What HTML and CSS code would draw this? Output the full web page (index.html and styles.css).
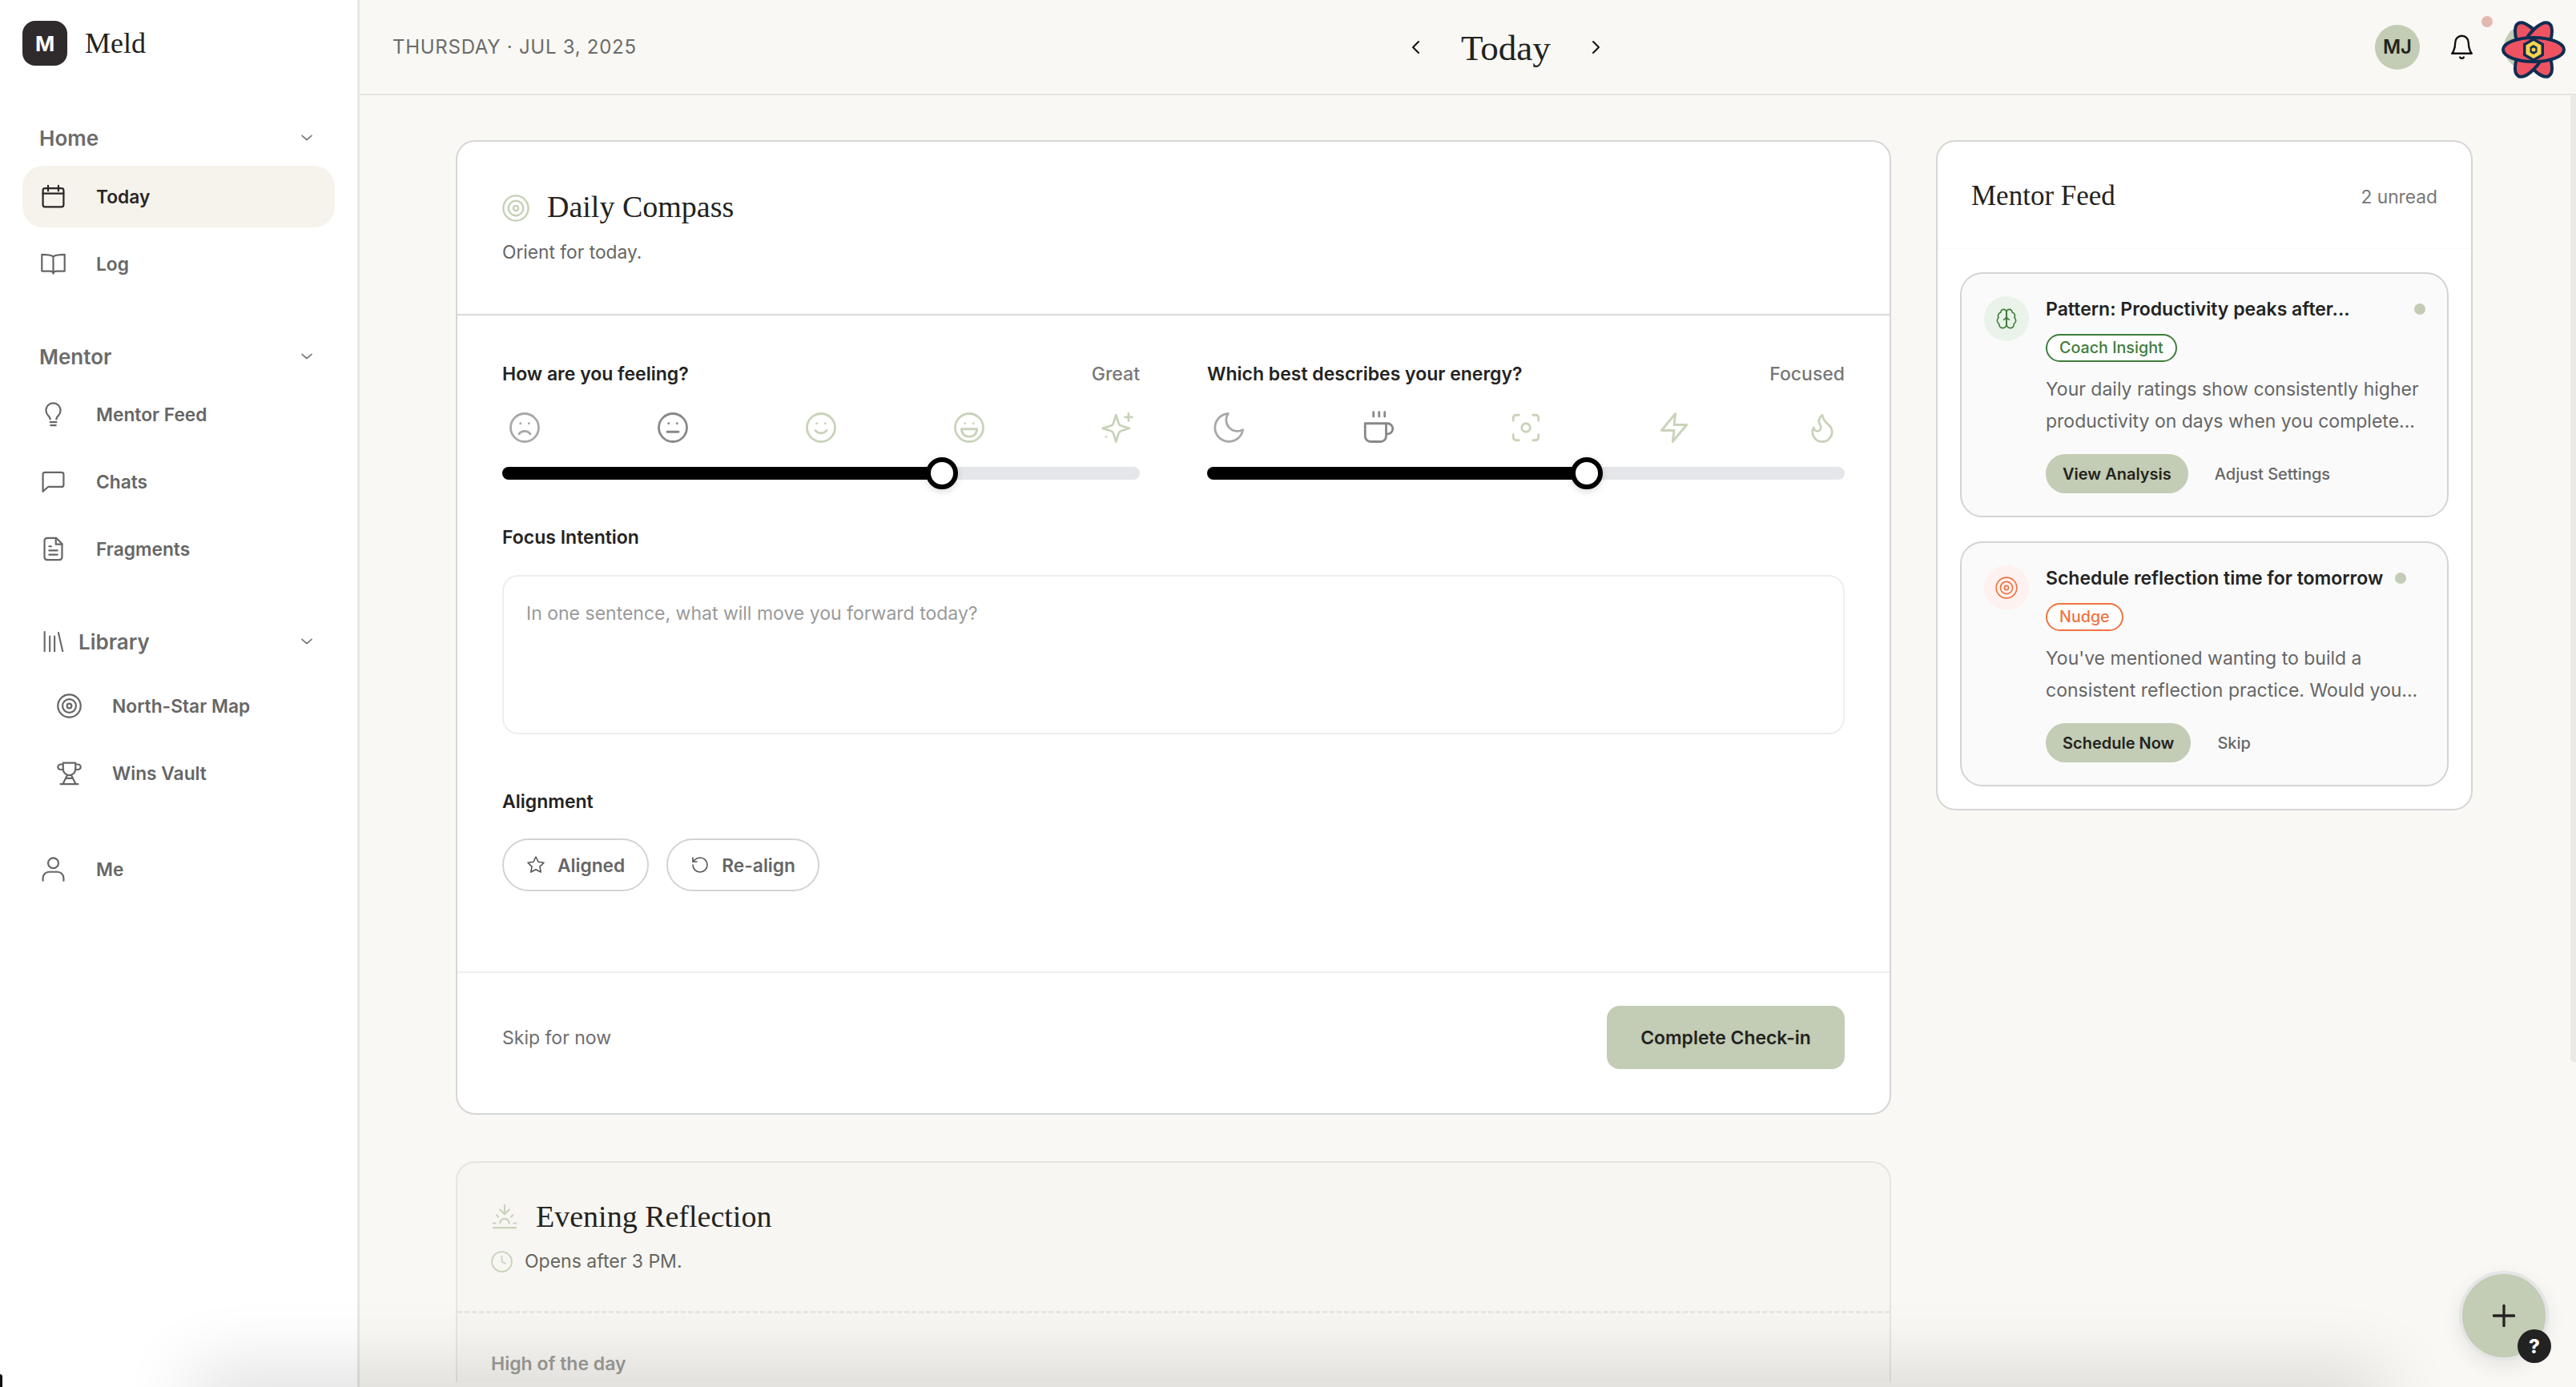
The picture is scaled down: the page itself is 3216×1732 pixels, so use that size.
FILE: index.html
```html
<!DOCTYPE html>
<html lang="en">
<head>
    <meta charset="UTF-8">
    <meta name="viewport" content="width=device-width, initial-scale=1.0">
    <title>Meld - Today</title>
    <link rel="stylesheet" href="styles.css">
</head>
<body>
    <svg class="sprite" xmlns="http://www.w3.org/2000/svg">
        <symbol id="i-chevron" viewBox="0 0 24 24"><path d="m3 8 9 8 9-8"/></symbol>
        <symbol id="i-calendar" viewBox="0 0 24 24"><rect x="2" y="4" width="20" height="18" rx="2"/><path d="M7 1.500v5M17 1.500v5M2 9h20"/></symbol>
        <symbol id="i-book" viewBox="0 0 24 24"><path d="M12 5C10 3.500 7 3 1 3v16h8c2 0 3 1 3 2.500 0-1.500 1-2.500 3-2.500h8V3c-6 0-9 .5-11 2Zm0 0v16.500"/></symbol>
        <symbol id="i-bulb" viewBox="0 0 24 24"><path d="M9 16.500c-.3-1.500-1-2.400-2-3.500a7 7 0 1 1 10 0c-1 1.100-1.700 2-2 3.500M9 19.500h6M9.500 22.500h5"/></symbol>
        <symbol id="i-chat" viewBox="0 0 24 24"><path d="M22 15a2 2 0 0 1-2 2H7l-5 4.500V5a2 2 0 0 1 2-2h16a2 2 0 0 1 2 2z"/></symbol>
        <symbol id="i-file" viewBox="0 0 24 24"><path d="M15 1.500H6a2.500 2.500 0 0 0-2.500 2.500v16A2.500 2.500 0 0 0 6 22.500h12a2.500 2.500 0 0 0 2.500-2.500V7z"/><path d="M14.500 1.500V7.500h6M8 9.500h2M8 13.500h8M8 17.500h8"/></symbol>
        <symbol id="i-library" viewBox="0 0 24 24"><path d="M2 1v23M8 6v18M13.500 6v18M18 2l5 22"/></symbol>
        <symbol id="i-target" viewBox="0 0 24 24"><circle cx="12" cy="12" r="11"/><circle cx="12" cy="12" r="6.500"/><circle cx="12" cy="12" r="2.200"/></symbol>
        <symbol id="i-trophy" viewBox="0 0 24 24"><path d="M6 2h12v6a6 6 0 0 1-12 0zM6 3.500H3.500a2.500 2.500 0 0 0 0 5H6.300M18 3.500h2.500a2.500 2.500 0 0 1 0 5h-2.800M10 14l-4 8M14 14l4 8M8.500 17h7M3.500 22.500h17"/></symbol>
        <symbol id="i-user" viewBox="0 0 24 24"><circle cx="12" cy="6" r="5"/><path d="M2 23v-2.500a6 6 0 0 1 6-6h8a6 6 0 0 1 6 6V23"/></symbol>
        <symbol id="i-bell" viewBox="0 0 24 24"><path d="M6 8a6 6 0 0 1 12 0c0 7 3 10 3 10H3s3-3 3-10M10.300 21.500a1.940 1.940 0 0 0 3.400 0"/></symbol>
        <symbol id="i-left" viewBox="0 0 12 18"><path d="M10 2 3 9l7 7"/></symbol>
        <symbol id="i-right" viewBox="0 0 12 18"><path d="m2 2 7 7-7 7"/></symbol>
        <symbol id="i-frown" viewBox="0 0 24 24"><circle cx="12" cy="12" r="10"/><path d="M16 16.500s-1.500-2-4-2-4 2-4 2M9 9h.01M15 9h.01"/></symbol>
        <symbol id="i-meh" viewBox="0 0 24 24"><circle cx="12" cy="12" r="10"/><path d="M8 15h8M9 9h.01M15 9h.01"/></symbol>
        <symbol id="i-smile" viewBox="0 0 24 24"><circle cx="12" cy="12" r="10"/><path d="M8 14s1.500 2 4 2 4-2 4-2M9 9h.01M15 9h.01"/></symbol>
        <symbol id="i-laugh" viewBox="0 0 24 24"><circle cx="12" cy="12" r="10"/><path d="M17.500 13c0 3.500-2.500 5.500-5.500 5.500S6.500 16.500 6.500 13zM9 9h.01M15 9h.01"/></symbol>
        <symbol id="i-sparkle" viewBox="0 0 24 24"><path d="M11 3l1.800 5.700a3 3 0 0 0 2 2l5.700 1.800-5.700 1.800a3 3 0 0 0-2 2L11 22l-1.800-5.700a3 3 0 0 0-2-2L1.500 12.500l5.700-1.800a3 3 0 0 0 2-2zM20 2v5M17.500 4.500h5M4 18.500v.01"/></symbol>
        <symbol id="i-moon" viewBox="0 0 24 24"><path d="M11 2a8 8 0 0 0 10.500 11.500A10 10 0 1 1 11 2Z"/></symbol>
        <symbol id="i-cup" viewBox="0 0 24 24"><path d="M9 1v3M13 1v3M17 1v3M18 9h1a3.500 3.500 0 0 1 0 7.500h-1M3 9h15v9a4 4 0 0 1-4 4H7a4 4 0 0 1-4-4z"/></symbol>
        <symbol id="i-focus" viewBox="0 0 24 24"><path d="M3 7V5a2 2 0 0 1 2-2h2M17 3h2a2 2 0 0 1 2 2v2M21 17v2a2 2 0 0 1-2 2h-2M7 21H5a2 2 0 0 1-2-2v-2"/><circle cx="12" cy="12" r="3"/></symbol>
        <symbol id="i-zap" viewBox="0 0 24 24"><path d="M13 2 3 14h9l-1 8 10-12h-9z"/></symbol>
        <symbol id="i-flame" viewBox="0 0 24 24"><path d="M8.500 14.500A2.500 2.500 0 0 0 11 12c0-1.380-.5-2-1-3-1.072-2.143-.224-4.054 2-6 .5 2.500 2 4.900 4 6.500 2 1.600 3 3.500 3 5.500a7 7 0 1 1-14 0c0-1.153.433-2.294 1-3a2.500 2.500 0 0 0 2.500 2.500z"/></symbol>
        <symbol id="i-star" viewBox="0 0 24 24"><path d="M12 2l3.090 6.260L22 9.270l-5 4.870 1.180 6.880L12 17.770l-6.180 3.250L7 14.140 2 9.270l6.910-1.010z"/></symbol>
        <symbol id="i-undo" viewBox="0 0 24 24"><path d="M3 12a9 9 0 1 0 9-9 9.750 9.750 0 0 0-6.740 2.740L3 8"/><path d="M3 3v5h5"/></symbol>
        <symbol id="i-sunset" viewBox="0 0 24 24"><path d="M12 10V2M4.930 10.930l1.410 1.410M2 18h2M20 18h2M19.070 10.930l-1.410 1.410M22 22H2M16 6l-4 4-4-4M16 18a4 4 0 0 0-8 0"/></symbol>
        <symbol id="i-clock" viewBox="0 0 24 24"><circle cx="12" cy="12" r="11"/><path d="M12 6v6l4 2"/></symbol>
        <symbol id="i-brain" viewBox="0 0 24 24"><path d="M12 5a3 3 0 1 0-5.997.125 4 4 0 0 0-2.526 5.770 4 4 0 0 0 .556 6.588A4 4 0 1 0 12 18Z"/><path d="M12 5a3 3 0 1 1 5.997.125 4 4 0 0 1 2.526 5.770 4 4 0 0 1-.556 6.588A4 4 0 1 1 12 18Z"/><path d="M15 13a4.500 4.500 0 0 1-3-4 4.500 4.500 0 0 1-3 4M12 18V5"/></symbol>
        <symbol id="i-plus" viewBox="0 0 24 24"><path d="M12 1v22M1 12h22"/></symbol>
    </svg>

    <div class="app">
        <aside class="sidebar">
            <div class="brand">
                <span class="brand-mark">M</span>
                <span class="brand-name">Meld</span>
            </div>

            <div class="nav-head nav-head-first">Home <svg class="chev"><use href="#i-chevron"/></svg></div>
            <a class="nav-item active"><svg class="nav-icon"><use href="#i-calendar"/></svg>Today</a>
            <a class="nav-item"><svg class="nav-icon"><use href="#i-book"/></svg>Log</a>

            <div class="nav-head nav-head-mentor">Mentor <svg class="chev"><use href="#i-chevron"/></svg></div>
            <a class="nav-item"><svg class="nav-icon"><use href="#i-bulb"/></svg>Mentor Feed</a>
            <a class="nav-item"><svg class="nav-icon"><use href="#i-chat"/></svg>Chats</a>
            <a class="nav-item"><svg class="nav-icon"><use href="#i-file"/></svg>Fragments</a>

            <div class="nav-head nav-head-library"><svg class="lib-icon"><use href="#i-library"/></svg>Library <svg class="chev"><use href="#i-chevron"/></svg></div>
            <a class="nav-item nav-sub"><svg class="nav-icon"><use href="#i-target"/></svg>North-Star Map</a>
            <a class="nav-item nav-sub"><svg class="nav-icon"><use href="#i-trophy"/></svg>Wins Vault</a>

            <a class="nav-item nav-me"><svg class="nav-icon"><use href="#i-user"/></svg>Me</a>
        </aside>

        <div class="main">
            <header class="topbar">
                <div class="date">Thursday · Jul 3, 2025</div>
                <div class="day-nav">
                    <svg class="day-arrow"><use href="#i-left"/></svg>
                    <h1>Today</h1>
                    <svg class="day-arrow"><use href="#i-right"/></svg>
                </div>
                <div class="top-actions">
                    <span class="avatar">MJ</span>
                    <svg class="bell"><use href="#i-bell"/></svg>
                    <span class="notify-dot"></span>
                    <span class="avatar avatar-logo">
                        <svg class="atom" viewBox="0 0 84 84">
                            <g fill="#ef5361" stroke="#0f2d52" stroke-width="4">
                                <ellipse cx="42" cy="42" rx="38" ry="15" transform="rotate(60 42 42)"/>
                                <ellipse cx="42" cy="42" rx="38" ry="15" transform="rotate(120 42 42)"/>
                                <ellipse cx="42" cy="42" rx="38" ry="15"/>
                            </g>
                            <path d="M42 27 55 34.500v15L42 57 29 49.500v-15z" fill="#0f2d52"/>
                            <path d="M42 31 51.500 36.500v11L42 53l-9.500-5.500v-11z" fill="#f8d24d"/>
                            <path d="M42 36 46.500 38.700v6.600L42 48l-4.500-2.700v-6.600z" fill="#0f2d52"/>
                            <circle cx="42" cy="42" r="2.500" fill="#f8d24d"/>
                        </svg>
                    </span>
                </div>
            </header>

            <div class="content">
                <div class="col-main">
                    <section class="card">
                        <div class="card-head">
                            <h2><svg class="title-icon"><use href="#i-target"/></svg>Daily Compass</h2>
                            <p class="sub">Orient for today.</p>
                        </div>

                        <div class="card-body">
                            <div class="sliders">
                                <div class="slider-block">
                                    <div class="slider-label"><b>How are you feeling?</b><span>Great</span></div>
                                    <div class="scale">
                                        <svg class="tone-a"><use href="#i-frown"/></svg>
                                        <svg class="tone-b"><use href="#i-meh"/></svg>
                                        <svg class="tone-c"><use href="#i-smile"/></svg>
                                        <svg class="tone-c"><use href="#i-laugh"/></svg>
                                        <svg class="tone-c"><use href="#i-sparkle"/></svg>
                                    </div>
                                    <div class="track"><div class="fill" style="width: 69%"><span class="thumb"></span></div></div>
                                </div>
                                <div class="slider-block">
                                    <div class="slider-label"><b>Which best describes your energy?</b><span>Focused</span></div>
                                    <div class="scale">
                                        <svg class="tone-a"><use href="#i-moon"/></svg>
                                        <svg class="tone-b"><use href="#i-cup"/></svg>
                                        <svg class="tone-c"><use href="#i-focus"/></svg>
                                        <svg class="tone-c"><use href="#i-zap"/></svg>
                                        <svg class="tone-c"><use href="#i-flame"/></svg>
                                    </div>
                                    <div class="track"><div class="fill" style="width: 59.5%"><span class="thumb"></span></div></div>
                                </div>
                            </div>

                            <label class="field-label focus-label">Focus Intention</label>
                            <textarea class="intention" placeholder="In one sentence, what will move you forward today?"></textarea>

                            <label class="field-label align-label">Alignment</label>
                            <div class="pills">
                                <button class="pill"><svg><use href="#i-star"/></svg>Aligned</button>
                                <button class="pill"><svg><use href="#i-undo"/></svg>Re-align</button>
                            </div>
                        </div>

                        <div class="card-foot">
                            <span class="skip">Skip for now</span>
                            <button class="btn-primary">Complete Check-in</button>
                        </div>
                    </section>

                    <section class="card card-muted">
                        <div class="muted-head">
                            <h2><svg class="sun-icon"><use href="#i-sunset"/></svg>Evening Reflection</h2>
                            <p class="opens"><svg class="clock-icon"><use href="#i-clock"/></svg>Opens after 3 PM.</p>
                        </div>
                        <div class="muted-body">High of the day</div>
                    </section>
                </div>

                <aside class="feed">
                    <div class="feed-head">
                        <h3>Mentor Feed</h3>
                        <span>2 unread</span>
                    </div>
                    <div class="feed-list">
                        <article class="feed-card">
                            <span class="blob blob-green"><svg><use href="#i-brain"/></svg></span>
                            <div class="feed-text">
                                <div class="feed-title"><b>Pattern: Productivity peaks after...</b><i class="dot dot-end"></i></div>
                                <span class="badge badge-green">Coach Insight</span>
                                <p>Your daily ratings show consistently higher productivity on days when you complete...</p>
                                <div class="feed-actions">
                                    <button class="btn-small">View Analysis</button>
                                    <span class="link">Adjust Settings</span>
                                </div>
                            </div>
                        </article>
                        <article class="feed-card">
                            <span class="blob blob-orange"><svg><use href="#i-target"/></svg></span>
                            <div class="feed-text">
                                <div class="feed-title"><b>Schedule reflection time for tomorrow</b><i class="dot"></i></div>
                                <span class="badge badge-orange">Nudge</span>
                                <p>You've mentioned wanting to build a consistent reflection practice. Would you...</p>
                                <div class="feed-actions">
                                    <button class="btn-small">Schedule Now</button>
                                    <span class="link">Skip</span>
                                </div>
                            </div>
                        </article>
                    </div>
                </aside>
            </div>
        </div>
    </div>

    <div class="overlay">
        <div class="scroll-thumb"></div>
        <div class="bottom-shade"></div>
        <div class="corner"></div>
    </div>
    <button class="fab"><svg><use href="#i-plus"/></svg><span class="help">?</span></button>
</body>
</html>
```

FILE: styles.css
```css
* {
    box-sizing: border-box;
}
html, body {
    margin: 0;
    height: 100%;
    overflow: hidden;
}
body {
    font-family: Inter, "Liberation Sans", sans-serif;
    font-size: 22.750px;
    color: #232323;
    background: #f9f8f4;
    position: relative;
}
svg {
    fill: none;
    stroke: currentColor;
    stroke-linecap: round;
    stroke-linejoin: round;
    display: block;
}
.sprite {
    position: absolute;
    width: 0;
    height: 0;
}
h1, h2, h3, p {
    margin: 0;
    font-weight: 400;
}
h1, h2, h3, .brand-name {
    font-family: "Liberation Serif", serif;
    color: #232320;
}
button {
    font-family: inherit;
    cursor: pointer;
}

.app {
    display: flex;
    height: 100%;
    overflow: hidden;
}

/* sidebar */
.sidebar {
    width: 449px;
    flex: none;
    background: #fff;
    border-right: 3px solid #e6e6e6;
    padding: 26px 28px 0;
}
.brand {
    display: flex;
    align-items: center;
    gap: 22px;
    height: 56px;
}
.brand-mark {
    width: 56px;
    height: 56px;
    border-radius: 16px;
    background: #2f2b2c;
    color: #fff;
    font-weight: 700;
    font-size: 26px;
    display: flex;
    align-items: center;
    justify-content: center;
}
.brand-name {
    font-size: 36px;
}
.nav-head {
    height: 46px;
    display: flex;
    align-items: center;
    padding-left: 21px;
    padding-right: 27px;
    font-size: 26px;
    font-weight: 600;
    color: #6b6b6b;
}
.nav-head-first {
    margin-top: 67px;
    margin-bottom: 12px;
}
.nav-head-mentor {
    margin-top: 54px;
    margin-bottom: 11px;
}
.nav-head-library {
    margin-top: 54px;
    margin-bottom: 19px;
    padding-left: 25px;
}
.chev {
    width: 16px;
    height: 16px;
    margin-left: auto;
    stroke-width: 2.500;
    color: #777;
}
.lib-icon {
    width: 27px;
    height: 26px;
    margin-right: 18px;
    stroke-width: 2;
}
.nav-item {
    display: flex;
    align-items: center;
    height: 77px;
    margin-bottom: 7px;
    padding-left: 23px;
    border-radius: 26px;
    font-weight: 600;
    color: #666;
}
.nav-item.active {
    background: #f6f3ec;
    color: #2a2626;
}
.nav-icon {
    width: 31px;
    height: 31px;
    flex: none;
    margin-right: 38px;
    stroke-width: 1.700;
}
.nav-sub {
    padding-left: 43px;
}
.nav-me {
    margin-top: 43px;
}

/* top bar */
.main {
    flex: 1;
    min-width: 0;
}
.topbar {
    height: 119px;
    border-bottom: 2px solid #e5e4e2;
    padding: 0 34px 0 41px;
    display: flex;
    align-items: center;
    justify-content: space-between;
}
.date {
    font-size: 24px;
    letter-spacing: 0.720px;
    text-transform: uppercase;
    color: #6b6b6b;
}
.day-nav {
    display: flex;
    align-items: center;
    gap: 51px;
}
.day-nav h1 {
    font-size: 45px;
    line-height: 60px;
    margin-top: 3px;
}
.day-arrow {
    width: 12px;
    height: 18px;
    color: #111;
    stroke-width: 2;
}
.top-actions {
    display: flex;
    align-items: center;
    position: relative;
}
.avatar {
    width: 56px;
    height: 56px;
    border-radius: 50%;
    background: #c3ccb4;
    display: flex;
    align-items: center;
    justify-content: center;
    font-size: 24px;
    font-weight: 600;
    color: #232320;
}
.avatar-logo {
    margin-left: 36px;
    position: relative;
}
.atom {
    position: absolute;
    left: -5px;
    top: -11px;
    width: 84px;
    height: 84px;
    stroke: none;
}
.bell {
    width: 33px;
    height: 33px;
    margin-left: 36px;
    color: #111;
    stroke-width: 1.700;
}
.notify-dot {
    position: absolute;
    left: 133px;
    top: -11px;
    width: 14px;
    height: 14px;
    border-radius: 50%;
    background: #e3b8ae;
}

/* content columns */
.content {
    display: flex;
    align-items: flex-start;
    gap: 56px;
    padding: 56px 0 0 120px;
}
.col-main {
    width: 1792px;
    flex: none;
}
.card {
    background: #fff;
    border: 2px solid #d6d6d6;
    border-radius: 24px;
}
.card-head {
    padding: 57px 56px 61px;
    border-bottom: 2px solid #dadada;
}
.card-head h2 {
    display: flex;
    align-items: center;
    font-size: 38px;
    line-height: 48px;
}
.title-icon {
    width: 34px;
    height: 34px;
    margin-top: 3px;
    margin-right: 22px;
    color: #c5d0b5;
    stroke-width: 1.700;
}
.sub {
    margin-top: 17px;
    line-height: 32px;
    color: #666;
}
.card-body {
    padding: 57px 56px 100px;
}
.sliders {
    display: flex;
    gap: 84px;
}
.slider-block {
    flex: 1;
}
.slider-label {
    display: flex;
    justify-content: space-between;
    line-height: 32px;
    font-size: 23px;
}
.slider-label b {
    font-weight: 600;
    color: #232323;
}
.slider-label span {
    font-weight: 500;
    color: #777;
}
.scale {
    display: flex;
    justify-content: space-between;
    margin-top: 30px;
}
.scale svg {
    width: 56px;
    height: 42px;
    stroke-width: 1.600;
}
.tone-a {
    color: #a8a8a8;
}
.tone-b {
    color: #888;
}
.tone-c {
    color: #c8d3b9;
}
.track {
    height: 16px;
    margin-top: 28px;
    border-radius: 8px;
    background: #e5e6ea;
}
.fill {
    height: 100%;
    background: #000;
    border-radius: 8px;
    position: relative;
}
.thumb {
    position: absolute;
    right: -20px;
    top: -12px;
    width: 40px;
    height: 40px;
    border-radius: 50%;
    border: 6px solid #000;
    background: #fff;
    box-shadow: 0 3px 8px rgba(0, 0, 0, 0.15);
}
.field-label {
    display: block;
    line-height: 32px;
    font-size: 23px;
    font-weight: 600;
}
.focus-label {
    margin-top: 56px;
}
.align-label {
    margin-top: 68px;
}
.intention {
    display: block;
    width: 100%;
    height: 199px;
    margin-top: 31px;
    padding: 30px 28px;
    border: 2px solid #eeeeee;
    border-radius: 20px;
    font-family: inherit;
    font-size: 23px;
    line-height: 32px;
    resize: none;
    outline: none;
    background: #fff;
}
.intention::placeholder {
    color: #9a9a9a;
}
.pills {
    display: flex;
    gap: 22px;
    margin-top: 30px;
}
.pill {
    height: 66px;
    padding: 0 28px;
    display: flex;
    align-items: center;
    gap: 15px;
    background: #fff;
    border: 2px solid #d3d3d3;
    border-radius: 33px;
    font-size: 22.750px;
    font-weight: 600;
    color: #666;
}
.pill svg {
    width: 24px;
    height: 24px;
    stroke-width: 1.600;
    color: #555;
}
.card-foot {
    display: flex;
    align-items: center;
    justify-content: space-between;
    padding: 41px 56px 55px;
    border-top: 2px solid #efefef;
}
.skip {
    font-size: 23px;
    color: #6e6e6e;
}
.btn-primary {
    width: 297px;
    height: 79px;
    border: none;
    border-radius: 16px;
    background: #c3ccb4;
    color: #232320;
    font-size: 22.900px;
    font-weight: 600;
}

/* evening card */
.card-muted {
    margin-top: 58px;
    height: 276px;
    border-bottom: none;
    border-radius: 24px 24px 0 0;
    background: #f7f6f2;
    border-color: #e5e5e3;
}
.muted-head {
    padding: 43px 42px 46px;
    border-bottom: 3px dashed #e6e6e3;
}
.muted-head h2 {
    display: flex;
    align-items: center;
    font-size: 38px;
    line-height: 48px;
}
.sun-icon {
    width: 34px;
    height: 34px;
    margin-right: 22px;
    color: #c8d3b9;
    stroke-width: 1.500;
}
.opens {
    display: flex;
    align-items: center;
    margin-top: 16px;
    line-height: 32px;
    font-size: 23px;
    color: #666660;
}
.clock-icon {
    width: 27px;
    height: 27px;
    margin-right: 15px;
    color: #c8d3b9;
    stroke-width: 1.600;
}
.muted-body {
    padding: 47px 42px 0;
    line-height: 32px;
    font-size: 23px;
    font-weight: 600;
    color: #9c9c98;
}

/* mentor feed */
.feed {
    width: 670px;
    flex: none;
    background: #fff;
    border: 2px solid #d6d6d6;
    border-radius: 24px;
}
.feed-head {
    height: 134px;
    padding: 4px 42px 0;
    display: flex;
    align-items: center;
    justify-content: space-between;
    border-bottom: 2px solid #fbfbf9;
}
.feed-head h3 {
    font-size: 35px;
}
.feed-head span {
    font-size: 22.750px;
    color: #777;
}
.feed-list {
    padding: 29px 28px 28px;
    display: flex;
    flex-direction: column;
    gap: 30px;
}
.feed-card {
    height: 306px;
    display: flex;
    align-items: flex-start;
    gap: 21px;
    padding: 26px 28px 0;
    background: #fafafa;
    border: 2px solid #d4d4d4;
    border-radius: 28px;
}
.blob {
    width: 56px;
    height: 56px;
    margin-top: 2px;
    border-radius: 50%;
    flex: none;
    display: flex;
    align-items: center;
    justify-content: center;
}
.blob svg {
    width: 28px;
    height: 28px;
    stroke-width: 1.400;
}
.blob-green {
    background: #e9f3e9;
    color: #3f7d3a;
}
.blob-orange {
    background: #fdf2ef;
    color: #ef7341;
}
.feed-text {
    flex: 1;
    min-width: 0;
}
.feed-title {
    display: flex;
    align-items: center;
    gap: 15px;
    line-height: 34px;
    font-size: 23px;
    margin-top: 1px;
}
.feed-title b {
    font-weight: 600;
    white-space: nowrap;
    color: #232323;
}
.dot {
    width: 14px;
    height: 14px;
    flex: none;
    border-radius: 50%;
    background: #c3ccb4;
}
.dot-end {
    margin-left: auto;
    margin-right: -1px;
}
.badge {
    display: inline-block;
    height: 35px;
    margin-top: 14px;
    padding: 0 15px;
    border: 2px solid;
    border-radius: 18px;
    line-height: 31px;
    font-size: 19.700px;
    font-weight: 500;
    vertical-align: top;
}
.badge-green {
    color: #3f7d3a;
    background: #fff;
}
.badge-orange {
    color: #ef7341;
    background: #fff;
}
.feed-text p {
    margin-top: 15px;
    line-height: 39.500px;
    font-size: 23px;
    color: #666;
}
.feed-actions {
    display: flex;
    align-items: center;
    gap: 33px;
    margin-top: 21px;
}
.btn-small {
    height: 49px;
    padding: 0 21px;
    border: none;
    border-radius: 25px;
    background: #c3ccb4;
    color: #232320;
    font-size: 20px;
    font-weight: 600;
}
.link {
    font-size: 20px;
    font-weight: 500;
    color: #666;
}

/* things that float over the page */
.overlay {
    position: absolute;
    top: 0;
    left: 0;
    width: 100%;
    height: 100%;
    overflow: hidden;
    pointer-events: none;
}
.scroll-thumb {
    position: absolute;
    right: 0;
    top: 118px;
    width: 7px;
    height: 1208px;
    background: #e9e9e7;
    border-radius: 4px 0 0 4px;
}
.bottom-shade {
    position: absolute;
    left: 260px;
    right: 260px;
    bottom: -40px;
    height: 40px;
    box-shadow: 0 0 90px 20px rgba(0, 0, 0, 0.14);
}
.corner {
    position: absolute;
    left: 0;
    bottom: 0;
    width: 3px;
    height: 16px;
    background: #111;
    border-radius: 0 3px 0 0;
}
.fab {
    position: absolute;
    left: 3070px;
    top: 1587px;
    width: 112px;
    height: 112px;
    padding: 0;
    border: 4px solid #e5e5e6;
    border-radius: 50%;
    background: #c3ccb4;
    color: #232320;
    display: flex;
    align-items: center;
    justify-content: center;
    box-shadow: 0 8px 24px rgba(0, 0, 0, 0.08);
}
.fab svg {
    width: 28px;
    height: 28px;
    stroke-width: 2.800;
}
.help {
    position: absolute;
    right: -7px;
    bottom: -7px;
    width: 42px;
    height: 42px;
    border-radius: 50%;
    background: #222;
    color: #fff;
    font-size: 24px;
    font-weight: 800;
    display: flex;
    align-items: center;
    justify-content: center;
}
```
